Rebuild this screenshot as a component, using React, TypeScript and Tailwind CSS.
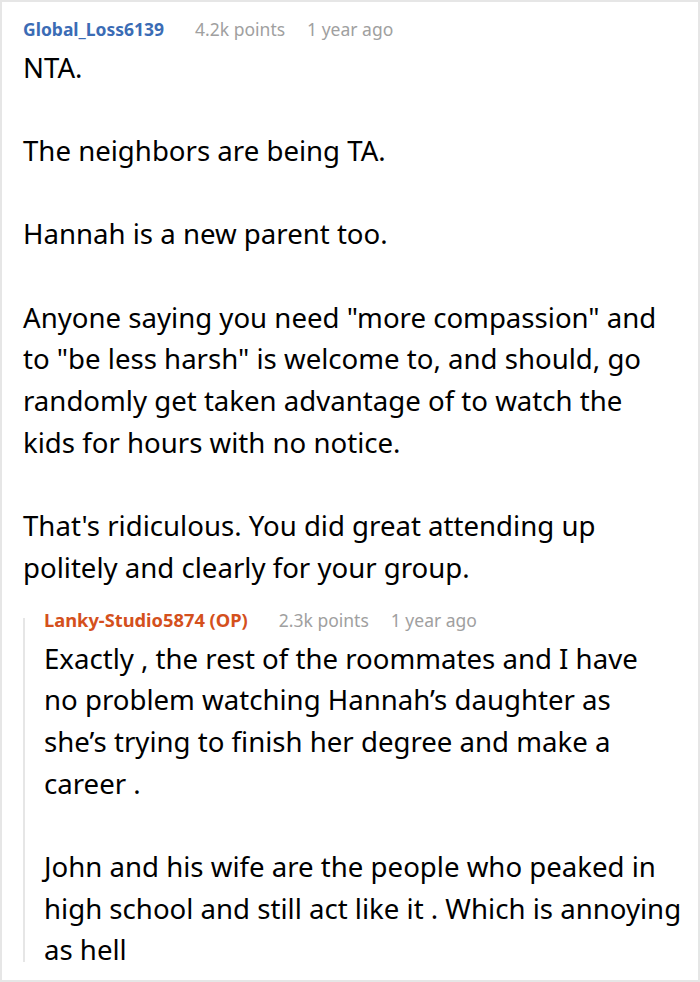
const bodyFont = { fontFamily: '"Noto Sans", "Open Sans", sans-serif' };

function Meta({ name, points, time, nameClass }: { name: string; points: string; time: string; nameClass: string }) {
    return (
        <div className="flex items-center text-[17.5px] leading-[24px] whitespace-nowrap">
            <span className={`font-bold ${nameClass}`}>{name}</span>
            <span className="ml-[31px] text-[#a0a0a0]">{points}</span>
            <span className="ml-[22px] text-[#a0a0a0]">{time}</span>
        </div>
    );
}

export default function App() {
    return (
        <div style={bodyFont} className="w-[700px] h-[982px] bg-white border-2 border-[#e6e6e6] overflow-hidden">
            <div className="pl-[21px] pt-[15px]">
                <Meta name="Global_Loss6139" points="4.2k points" time="1 year ago" nameClass="text-[#3b6cb5]" />
                <div className="mt-[5.5px] text-[27.6px] leading-[41.7px] text-black whitespace-nowrap">
                    <p>NTA.</p>
                    <p className="mt-[41.7px]">The neighbors are being TA.</p>
                    <p className="mt-[41.7px]">Hannah is a new parent too.</p>
                    <p className="mt-[41.7px]">
                        Anyone saying you need "more compassion" and<br />
                        to "be less harsh" is welcome to, and should, go<br />
                        randomly get taken advantage of to watch the<br />
                        kids for hours with no notice.
                    </p>
                    <p className="mt-[41.7px]">
                        That's ridiculous. You did great attending up<br />
                        politely and clearly for your group.
                    </p>
                </div>

                {/* reply */}
                <div className="mt-[29.5px] flex flex-col border-l-2 border-[#e6e6e6] pl-[19px]">
                    <div className="-mt-[10px]">
                        <Meta name="Lanky-Studio5874 (OP)" points="2.3k points" time="1 year ago" nameClass="text-[#d4501c] text-[18.3px]" />
                    </div>
                    <div className="mt-[5.5px] -mb-[9px] text-[27.6px] leading-[41.7px] text-black whitespace-nowrap">
                        <p>
                            Exactly , the rest of the roommates and I have<br />
                            no problem watching Hannah’s daughter as<br />
                            she’s trying to finish her degree and make a<br />
                            career .
                        </p>
                        <p className="mt-[41.7px]">
                            John and his wife are the people who peaked in<br />
                            high school and still act like it . Which is annoying<br />
                            as hell
                        </p>
                    </div>
                </div>
            </div>
        </div>
    );
}
